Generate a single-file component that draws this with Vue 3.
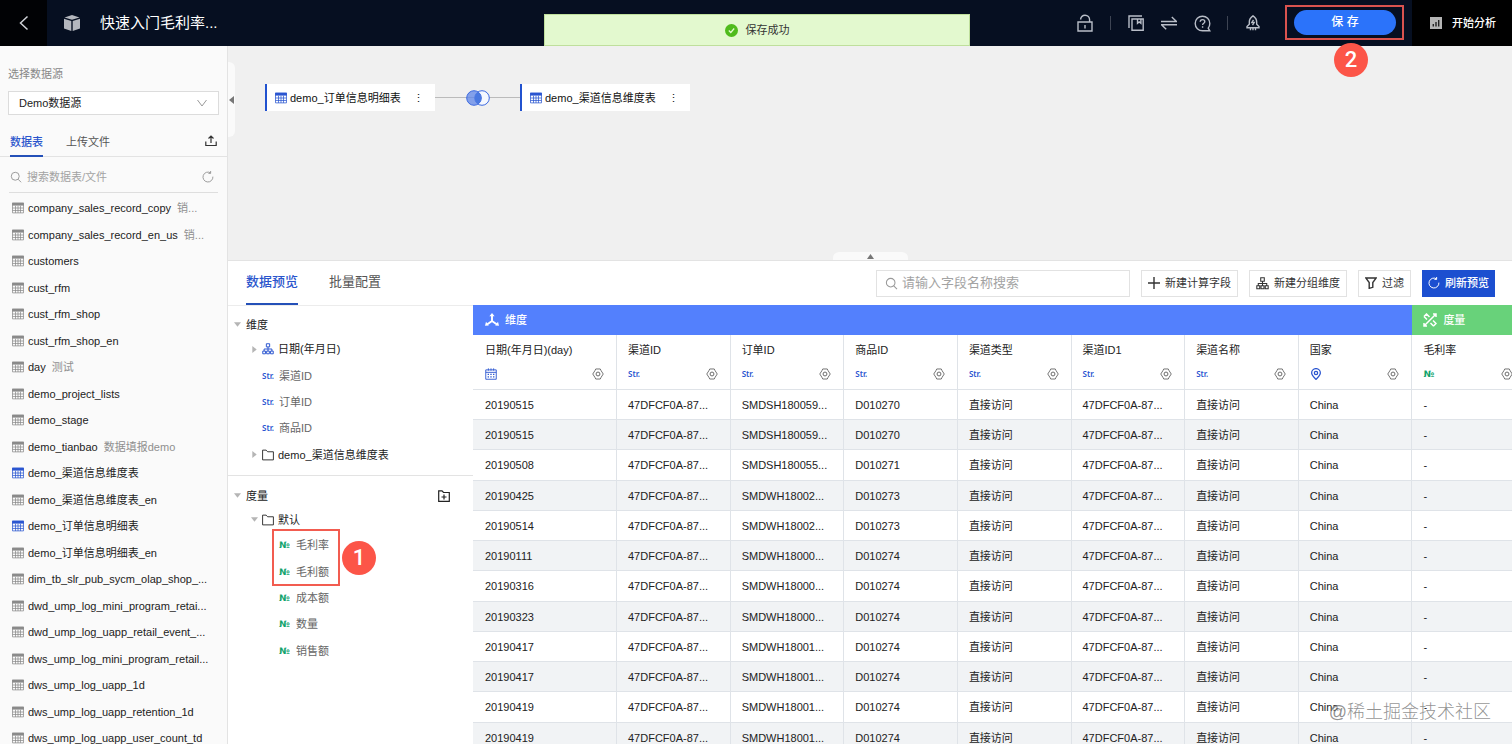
<script setup>
import { ref, h } from 'vue'

const svg = (size, children, extra = {}) =>
  h('svg', { width: size, height: size, viewBox: '0 0 16 16', fill: 'none', stroke: 'currentColor', 'stroke-width': 1.3, 'aria-hidden': 'true', ...extra }, children)
const p = (d, extra = {}) => h('path', { d, ...extra })
const solid = { fill: 'currentColor', stroke: 'none' }

const GridIcon = () => svg(12, [
  p('M.7 1.500h14.600v13H.7zM.7 8h14.600M.7 11.300h14.600M4.700 5v9.500M8 5v9.500M11.300 5v9.500', { 'stroke-width': 1 }),
  p('M.2 1h15.600v3.800H.2z', solid),
])
const FolderIcon = () => svg(12, [p('M.8 14.500V1.500h4.700l2 2.200h7.700v10.800z', { 'stroke-width': 1.200 })])
const TreeIcon = (props) => svg(props.size || 12, [
  p('M5.800 1h4.400v4.200H5.800zM1 10.800h3.600v3.600H1zM6.200 10.800h3.600v3.600H6.200zM11.400 10.800H15v3.600h-3.600zM8 5.200v5.600M2.800 10.800V8h10.400v2.800'),
])
const GearIcon = () => svg(12, [
  p('M5 1.300h6l1.200 2.400L15 8l-2.800 4.300L11 14.700H5l-1.200-2.400L1 8l2.800-4.300z', { 'stroke-width': 1.200 }),
  h('circle', { cx: 8, cy: 8, r: 2.6, 'stroke-width': 1.3 }),
])
const CalendarIcon = () => svg(12, [
  p('M1 2.500h14v12.500H1zM1 5.800h14M4.500.5v3M11.500.5v3M8 .5v3', { 'stroke-width': 1.200 }),
  p('M3.500 8.500h9M3.500 11.800h9', { 'stroke-dasharray': '1.800 1.800', 'stroke-width': 1.600 }),
])
const PinIcon = () => svg(12, [
  p('M8 15.200C4.800 12 2.200 9.600 2.200 6.600a5.800 5.800 0 0 1 11.600 0c0 3-2.600 5.400-5.800 8.600z', { 'stroke-width': 1.700 }),
  h('circle', { cx: 8, cy: 6.7, r: 2.2, 'stroke-width': 1.7 }),
])
const SearchIcon = (props) => svg(props.size || 12, [
  h('circle', { cx: 7, cy: 7, r: 5.3 }),
  p('M10.800 11l4 4'),
])
const ReloadIcon = () => svg(12, [p('M14.500 7.500a6.600 6.600 0 1 1-3-5M11.500 0v3.200H8.500')])
const CaretIcon = (props) => svg(7, [p('open' in props ? 'M0 3h16L8 13z' : 'M3 0v16l10-8z', solid)])

const tables = [
  ['company_sales_record_copy', '销...'],
  ['company_sales_record_en_us', '销...'],
  ['customers'],
  ['cust_rfm'],
  ['cust_rfm_shop'],
  ['cust_rfm_shop_en'],
  ['day', '测试'],
  ['demo_project_lists'],
  ['demo_stage'],
  ['demo_tianbao', '数据填报demo'],
  ['demo_渠道信息维度表', '', true],
  ['demo_渠道信息维度表_en'],
  ['demo_订单信息明细表', '', true],
  ['demo_订单信息明细表_en'],
  ['dim_tb_slr_pub_sycm_olap_shop_...'],
  ['dwd_ump_log_mini_program_retai...'],
  ['dwd_ump_log_uapp_retail_event_...'],
  ['dws_ump_log_mini_program_retail...'],
  ['dws_ump_log_uapp_1d'],
  ['dws_ump_log_uapp_retention_1d'],
  ['dws_ump_log_uapp_user_count_td'],
].map(([name, note, used]) => ({ name, note, used }))

const dimensions = ['渠道ID', '订单ID', '商品ID']
const measures = ['毛利率', '毛利额', '成本额', '数量', '销售额']

const columns = [
  { name: '日期(年月日)(day)', type: 'date' },
  { name: '渠道ID', type: 'str' },
  { name: '订单ID', type: 'str' },
  { name: '商品ID', type: 'str' },
  { name: '渠道类型', type: 'str' },
  { name: '渠道ID1', type: 'str' },
  { name: '渠道名称', type: 'str' },
  { name: '国家', type: 'geo' },
  { name: '毛利率', type: 'num' },
]

const rows = [
  ['20190515', 'SMDSH180059...', 'D010270'],
  ['20190515', 'SMDSH180059...', 'D010270'],
  ['20190508', 'SMDSH180055...', 'D010271'],
  ['20190425', 'SMDWH18002...', 'D010273'],
  ['20190514', 'SMDWH18002...', 'D010273'],
  ['20190111', 'SMDWH18000...', 'D010274'],
  ['20190316', 'SMDWH18000...', 'D010274'],
  ['20190323', 'SMDWH18000...', 'D010274'],
  ['20190417', 'SMDWH18001...', 'D010274'],
  ['20190417', 'SMDWH18001...', 'D010274'],
  ['20190419', 'SMDWH18001...', 'D010274'],
  ['20190419', 'SMDWH18001...', 'D010274'],
].map(([day, order, item]) => [day, '47DFCF0A-87...', order, item, '直接访问', '47DFCF0A-87...', '直接访问', 'China', '-'])

const source = ref('demo')
const tableQuery = ref('')
const fieldQuery = ref('')
</script>

<template>
  <div class="app">
    <header class="topbar">
      <button class="back" aria-label="返回">
        <svg width="16" height="16" viewBox="0 0 16 16" fill="none" stroke="currentColor" stroke-width="1.5"><path d="M11.500 1.500L4.500 8l7 6.500" /></svg>
      </button>
      <svg class="cube" width="18" height="18" viewBox="0 0 18 18" fill="currentColor" aria-hidden="true">
        <path d="M9 1l7.500 2.400L9 5.800 1.500 3.400z" />
        <path d="M1 4.800l7.300 2.300V17L1 14.600z" />
        <path d="M17 4.800L9.700 7.100V17l7.300-2.400z" />
      </svg>
      <h1>快速入门毛利率...</h1>
      <div class="tools">
        <button aria-label="锁定">
          <svg width="16" height="18" viewBox="0 0 16 18"><path d="M1 8h14v9H1zM3.500 5.500C4 2.800 5.800 1.200 8 1.200c2.700 0 4.600 2 4.600 4.600V8M8 11v3.500" /></svg>
        </button>
        <i></i>
        <button aria-label="复制">
          <svg width="16" height="16" viewBox="0 0 16 16"><path d="M1 13V1h13M4 4h11.200v11.200H4zM9.500 4v4.300l1.700-1.300 1.700 1.300V4" /></svg>
        </button>
        <button aria-label="切换">
          <svg width="16" height="16" viewBox="0 0 16 16"><path d="M0 6.500h15.500L10.800 2M16 9.700H.5L5.200 14.200" /></svg>
        </button>
        <button aria-label="帮助">
          <svg width="17" height="17" viewBox="0 0 17 17"><path d="M15.800 15.800H8.500a7.300 7.300 0 1 1 7.300-7.300c0 1.800-.6 3.400-1.600 4.600zM6.200 6.800c0-1.400 1-2.200 2.300-2.200s2.300.8 2.300 2.100c0 1.600-2.200 1.600-2.200 3.300M8.600 11.300v1.500" /></svg>
        </button>
        <i></i>
        <button aria-label="通知">
          <svg width="16" height="16" viewBox="0 0 16 16"><path d="M8 .8C5.500 2.500 4.300 4.500 4.300 7v2.200L2 11.500v1.200h12v-1.200l-2.300-2.300V7C11.700 4.500 10.500 2.500 8 .8zM8.500 4.800L6.800 7.500h2.400L7.500 10.200M5.500 13v2.200M8 13v2.200M10.500 13v2.200" /></svg>
        </button>
      </div>
      <div class="save-mark">
        <button class="save">保 存</button>
        <span class="badge">2</span>
      </div>
      <button class="analyze">
        <svg width="12" height="12" viewBox="0 0 12 12" aria-hidden="true"><path fill="#b5b5b5" d="M0 0h12v12H0z" /><path stroke="#222" stroke-width="1.400" d="M3.300 9.500V7M6 9.500V5M8.700 9.500V3" /></svg>
        开始分析
      </button>
      <div class="toast" role="status">
        <svg width="13" height="13" viewBox="0 0 13 13" aria-hidden="true"><circle cx="6.500" cy="6.500" r="6.500" fill="#4fbb1c" /><path d="M3.800 6.500l2 2 3.400-4" fill="none" stroke="#e5fbd2" stroke-width="1.200" /></svg>
        保存成功
      </div>
    </header>

    <div class="body">
      <aside class="sidebar">
        <label class="source-label" for="source">选择数据源</label>
        <div class="select">
          <select id="source" v-model="source">
            <option value="demo">Demo数据源</option>
          </select>
          <svg width="10" height="8" viewBox="0 0 10 8" fill="none" stroke="#999" aria-hidden="true"><path d="M.5 1L5 7l4.500-6" /></svg>
        </div>
        <nav class="side-tabs">
          <button class="on">数据表</button>
          <button>上传文件</button>
          <button class="upload" aria-label="上传">
            <svg width="12" height="12" viewBox="0 0 12 12" fill="none" stroke="currentColor" stroke-width="1.200"><path d="M.8 6.500v4h10.400v-4M6 8V1M3.500 3.500L6 1l2.500 2.500" /></svg>
          </button>
        </nav>
        <div class="side-search">
          <SearchIcon />
          <input v-model="tableQuery" type="text" placeholder="搜索数据表/文件" aria-label="搜索数据表/文件" />
          <button aria-label="刷新"><ReloadIcon /></button>
        </div>
        <ul class="tables">
          <li v-for="t in tables" :key="t.name" :class="{ used: t.used }">
            <GridIcon /><span>{{ t.name }}</span><small v-if="t.note">{{ t.note }}</small>
          </li>
        </ul>
      </aside>

      <main class="main">
        <section class="canvas">
          <button class="fold-left" aria-label="收起侧栏"><svg width="5" height="8" viewBox="0 0 5 8" fill="#777"><path d="M5 0v8L0 4z" /></svg></button>
          <div class="flow">
            <div class="node"><GridIcon /><span>demo_订单信息明细表</span><button aria-label="更多">⋮</button></div>
            <div class="link">
              <svg width="24" height="16" viewBox="0 0 24 16" aria-hidden="true">
                <circle cx="16" cy="8" r="7.300" fill="#f5f8ff" stroke="#3d6ae0" />
                <circle cx="8" cy="8" r="7.300" fill="#5f86e8" fill-opacity=".75" stroke="#3d6ae0" />
                <path d="M12 1.900a7.300 7.300 0 0 1 0 12.200a7.300 7.300 0 0 1 0-12.200z" fill="#4a78e0" />
              </svg>
            </div>
            <div class="node"><GridIcon /><span>demo_渠道信息维度表</span><button aria-label="更多">⋮</button></div>
          </div>
          <button class="fold-down" aria-label="展开面板"><svg width="7" height="5" viewBox="0 0 7 5" fill="#777"><path d="M0 5h7L3.500 0z" /></svg></button>
        </section>

        <section class="panel">
          <div class="bar">
            <nav class="tabs">
              <button class="on">数据预览</button>
              <button>批量配置</button>
            </nav>
            <div class="field-search">
              <SearchIcon :size="13" />
              <input v-model="fieldQuery" type="text" placeholder="请输入字段名称搜索" aria-label="请输入字段名称搜索" />
            </div>
            <button class="btn"><svg width="12" height="12" viewBox="0 0 12 12" stroke="currentColor" stroke-width="1.400"><path d="M6 0v12M0 6h12" /></svg>新建计算字段</button>
            <button class="btn"><TreeIcon :size="13" />新建分组维度</button>
            <button class="btn"><svg width="12" height="12" viewBox="0 0 12 12" fill="none" stroke="currentColor" stroke-width="1.400"><path d="M.8 1h10.400L7.800 5.500v4.800l-3.600 1V5.500z" /></svg>过滤</button>
            <button class="btn primary"><ReloadIcon />刷新预览</button>
          </div>

          <div class="content">
            <div class="tree">
              <div class="group">
                <h2><CaretIcon open />维度</h2>
                <ul>
                  <li class="branch"><CaretIcon /><TreeIcon class="blue" />日期(年月日)</li>
                  <li v-for="d in dimensions" :key="d"><b class="str">Str.</b>{{ d }}</li>
                  <li class="branch"><CaretIcon /><FolderIcon />demo_渠道信息维度表</li>
                </ul>
              </div>
              <div class="group">
                <h2>
                  <CaretIcon open />度量
                  <button aria-label="新建文件夹"><svg width="12" height="12" viewBox="0 0 12 12" fill="none" stroke="currentColor" stroke-width="1.200"><path d="M.7 11.300V.8H4l1.500 1.700h5.800v8.800zM6 4.500v5M3.500 7h5" /></svg></button>
                </h2>
                <div class="branch folder"><CaretIcon open /><FolderIcon />默认</div>
                <ul class="leaves">
                  <li v-for="m in measures" :key="m"><b class="num">№</b>{{ m }}</li>
                  <li class="mark" aria-hidden="true"><span class="badge">1</span></li>
                </ul>
              </div>
            </div>

            <div class="grid">
              <table>
                <colgroup><col class="first" /><col v-for="n in 8" :key="n" /></colgroup>
                <thead>
                  <tr class="bands">
                    <th colspan="8" class="band-dim">
                      <div><svg width="14" height="14" viewBox="0 0 14 14" fill="none" stroke="currentColor" stroke-width="1.900" aria-hidden="true"><path d="M7 2v6L2 11.500M7 8l5 3.500" /><path d="M7 0l2.600 3.200H4.400zM0 12.800l1-4 2.800 3.700zM14 12.800l-1-4-2.800 3.700z" fill="currentColor" stroke="none" /></svg>维度</div>
                    </th>
                    <th class="band-num">
                      <div><svg width="14" height="14" viewBox="0 0 14 14" fill="none" stroke="currentColor" stroke-width="1.500" aria-hidden="true"><path d="M1 13L13 1M4 13H1v-3M1 3.500L3.500 1l3 3M1 3.500l3 3M10.500 13L13 10.500l-3-3M10.500 13l-3-3M10 1h3v3" /></svg>度量</div>
                    </th>
                  </tr>
                  <tr class="fields">
                    <th v-for="c in columns" :key="c.name">
                      <p>{{ c.name }}</p>
                      <div>
                        <CalendarIcon v-if="c.type === 'date'" class="blue" />
                        <PinIcon v-else-if="c.type === 'geo'" class="blue" />
                        <b v-else-if="c.type === 'num'" class="num">№</b>
                        <b v-else class="str">Str.</b>
                        <button aria-label="字段设置"><GearIcon /></button>
                      </div>
                    </th>
                  </tr>
                </thead>
                <tbody>
                  <tr v-for="(r, i) in rows" :key="i">
                    <td v-for="(v, j) in r" :key="j">{{ v }}</td>
                  </tr>
                </tbody>
              </table>
            </div>
          </div>
        </section>
      </main>
    </div>
    <div class="watermark">@稀土掘金技术社区</div>
  </div>
</template>

<style>
body {
  background: #fff;
}
</style>

<style scoped>
* {
  box-sizing: border-box;
}
.app {
  position: relative;
  display: flex;
  flex-direction: column;
  height: 100vh;
  overflow: hidden;
  font: 11px/16px "Liberation Sans", "Noto Sans CJK SC", sans-serif;
  color: #222;
}
button,
input,
select {
  font: inherit;
  color: inherit;
  border: 0;
  padding: 0;
  margin: 0;
  background: none;
  outline: 0;
}
ul,
h1,
h2,
p {
  margin: 0;
  padding: 0;
  list-style: none;
  font-size: inherit;
  font-weight: 400;
}
svg {
  display: block;
  flex: none;
}
input::placeholder {
  color: #a3a3a3;
  opacity: 1;
}

.topbar {
  position: relative;
  z-index: 2;
  flex: none;
  display: flex;
  align-items: center;
  height: 46px;
  background: #060f21;
  color: #fff;
}
.back {
  display: flex;
  align-items: center;
  justify-content: center;
  width: 47px;
  height: 46px;
  background: #010205;
  color: #cfd2d8;
}
.cube {
  margin-left: 16px;
  color: #b4b7be;
}
h1 {
  margin-left: 19px;
  font-size: 15px;
  line-height: 22px;
}
.tools {
  display: flex;
  align-items: center;
  gap: 17px;
  margin-left: auto;
  color: #b9bec8;
}
.tools button {
  display: flex;
  justify-content: center;
  width: 16px;
}
.tools svg {
  fill: none;
  stroke: currentColor;
  stroke-width: 1.4;
}
.tools i {
  width: 1px;
  height: 14px;
  background: #3d4453;
}
.save-mark {
  position: relative;
  margin: 0 8px 2px 24px;
  padding: 3px 6px 3px 7px;
  border: 2px solid #d9534f;
}
.save {
  display: block;
  width: 102px;
  height: 25px;
  border-radius: 13px;
  background: #2b73fa;
  font-size: 12px;
  font-weight: 500;
}
.badge {
  display: block;
  width: 34px;
  height: 34px;
  border-radius: 50%;
  background: #fc5548;
  color: #fff;
  font: 500 22px/34px Roboto, sans-serif;
  text-align: center;
}
.save-mark .badge {
  position: absolute;
  top: 36px;
  left: 47px;
}
.analyze {
  display: flex;
  align-items: center;
  gap: 10px;
  height: 46px;
  padding: 0 16px 0 18px;
  background: #000;
  font-weight: 500;
}
.toast {
  position: absolute;
  left: 2px;
  right: 0;
  bottom: 0;
  display: flex;
  align-items: center;
  justify-content: center;
  gap: 8px;
  width: 426px;
  height: 32px;
  margin: 0 auto;
  border: 1px solid #bfdf9c;
  background: #e3f9cf;
  color: #333;
}

.body {
  flex: 1;
  display: flex;
  min-height: 0;
}
.sidebar {
  flex: none;
  display: flex;
  flex-direction: column;
  width: 228px;
  overflow: hidden;
  border-right: 1px solid #e3e3e3;
  background: #fafafa;
}
.sidebar > * {
  flex: none;
}
.source-label {
  margin: 20px 8px 9px;
  color: #888;
}
.select {
  position: relative;
  margin: 0 8px;
}
.select select {
  display: block;
  width: 100%;
  height: 24px;
  padding: 0 10px;
  appearance: none;
  border: 1px solid #dcdcdc;
  background: #fff;
}
.select svg {
  position: absolute;
  top: 8px;
  right: 12px;
}
.side-tabs {
  display: flex;
  gap: 23px;
  height: 42px;
  padding: 13px 10px 0;
  border-bottom: 1px solid #e3e3e3;
  color: #555;
}
.side-tabs button {
  height: 29px;
  padding-bottom: 2px;
}
.side-tabs .on,
.tabs .on {
  border-bottom: 2px solid #2450b8;
  color: #2a55cc;
  font-weight: 500;
}
.side-tabs .on {
  padding-bottom: 0;
}
.side-tabs .upload {
  margin-left: auto;
  padding-bottom: 4px;
  color: #333;
}
.side-search {
  display: flex;
  align-items: center;
  gap: 5px;
  height: 36px;
  margin: 0 9px;
  padding: 5px 4px 0 1px;
  border-bottom: 1px solid #dedede;
  color: #999;
}
.side-search input {
  flex: 1;
  min-width: 0;
}
.tables {
  padding-top: 2px;
}
.tables li {
  display: flex;
  align-items: center;
  height: 26px;
  padding-left: 12px;
  white-space: nowrap;
}
.tables li:nth-child(even) {
  height: 27px;
}
.tables svg {
  margin-right: 4px;
  color: #8a8a8a;
}
.tables .used svg,
.blue {
  color: #2a55d0;
}
.tables small {
  margin-left: 6px;
  font-size: 11px;
  color: #8f8f8f;
}

.main {
  flex: 1;
  display: flex;
  flex-direction: column;
  min-width: 0;
}
.canvas {
  position: relative;
  flex: none;
  height: 214px;
  padding: 38px 37px;
  background: #f0f0f0;
}
.flow {
  display: flex;
  align-items: center;
}
.node {
  display: flex;
  align-items: center;
  width: 170px;
  height: 27px;
  padding: 0 14px 0 8px;
  border-left: 2px solid #2152cf;
  background: #fff;
  color: #111;
}
.node svg {
  margin-right: 3px;
  color: #2a55d0;
}
.node button {
  margin-left: auto;
  width: 8px;
}
.link {
  display: flex;
  justify-content: center;
  width: 85px;
  background: linear-gradient(#bbb, #bbb) center / 100% 1px no-repeat;
}
.fold-left,
.fold-down {
  position: absolute;
  display: flex;
  align-items: center;
  justify-content: center;
  background: #fafafa;
}
.fold-left {
  left: 0;
  top: 16px;
  width: 7px;
  height: 75px;
  border-radius: 0 6px 6px 0;
}
.fold-down {
  left: 605px;
  bottom: 0;
  width: 75px;
  height: 8px;
  border-radius: 6px 6px 0 0;
}

.panel {
  flex: 1;
  display: flex;
  flex-direction: column;
  min-height: 0;
}
.bar {
  flex: none;
  display: flex;
  align-items: center;
  gap: 11px;
  height: 45px;
  padding: 0 17px 0 18px;
  border-top: 1px solid #e3e3e3;
}
.tabs {
  align-self: stretch;
  display: flex;
  gap: 31px;
  margin-right: auto;
  font-size: 13px;
  color: #555;
}
.tabs button {
  border-bottom: 2px solid transparent;
}
.field-search {
  display: flex;
  align-items: center;
  gap: 4px;
  width: 254px;
  height: 27px;
  padding: 0 8px;
  border: 1px solid #e2e2e2;
  color: #999;
  font-size: 13px;
}
.field-search input {
  flex: 1;
  min-width: 0;
}
.btn {
  display: flex;
  align-items: center;
  gap: 5px;
  height: 27px;
  padding: 0 6px;
  border: 1px solid #e2e2e2;
  color: #333;
  white-space: nowrap;
}
.primary {
  padding: 0 5px;
  border-color: #1c4fd0;
  background: #1c4fd0;
  color: #fff;
  font-weight: 500;
}
.content {
  flex: 1;
  display: flex;
  min-height: 0;
}
.tree {
  flex: none;
  width: 245px;
  border-top: 1px solid #ececec;
}
.group {
  position: relative;
  padding: 7px 0;
}
.group + .group {
  padding-top: 8px;
  border-top: 1px solid #e3e3e3;
}
h2 {
  display: flex;
  align-items: center;
  gap: 5px;
  height: 23px;
  padding: 0 23px 0 6px;
}
h2 button {
  margin-left: auto;
}
h2 > svg,
.branch > svg:first-child {
  color: #b5b5b5;
}
.group li,
.folder {
  display: flex;
  align-items: center;
  gap: 5px;
  height: 26px;
  padding-left: 34px;
  color: #666;
}
.group li:nth-child(3n + 2) {
  height: 27px;
}
.group .branch {
  gap: 4px;
  padding-left: 23px;
  color: #222;
}
.group .folder {
  height: 25px;
}
.branch > .blue {
  color: #2a55d0;
}
.leaves {
  position: relative;
}
.group .leaves li {
  padding-left: 51px;
}
.str,
.num {
  width: 12px;
  white-space: nowrap;
  font: 600 8px/16px "Noto Sans", sans-serif;
  color: #2a55d0;
}
.num {
  font: 700 9px/16px "DejaVu Sans", sans-serif;
  color: #12a36c;
}
.group .leaves .mark {
  position: absolute;
  top: -3px;
  left: 44px;
  width: 68px;
  height: 57px;
  padding: 0;
  border: 2px solid #f25c50;
}
.mark .badge {
  position: absolute;
  top: 10px;
  left: 68px;
}

.grid {
  flex: 1;
  min-width: 0;
  overflow: hidden;
}
table {
  width: 100%;
  min-width: 1053px;
  table-layout: fixed;
  border-collapse: separate;
  border-spacing: 0;
}
.first {
  width: 144px;
}
th,
td {
  padding: 0 12px 0 11px;
  text-align: left;
  font-weight: 400;
  white-space: nowrap;
}
th:first-child,
td:first-child {
  padding-left: 12px;
}
.bands th {
  height: 30px;
  color: #fff;
  font-weight: 500;
}
.bands div {
  display: flex;
  align-items: center;
  gap: 6px;
}
.band-dim {
  background: #5380fd;
}
.band-num {
  background: #68d27a;
}
.fields th,
td {
  border-right: 1px solid #dfe3e8;
  border-bottom: 1px solid #dfe3e8;
}
.fields th {
  height: 55px;
}
.fields div {
  display: flex;
  align-items: center;
  justify-content: space-between;
  margin-top: 8px;
  height: 16px;
}
.fields button {
  color: #666;
}
td {
  height: 30px;
}
tbody tr:nth-child(4n + 3) td {
  height: 31px;
}
tbody tr:nth-child(even) {
  background: #f1f3f5;
}
.watermark {
  position: absolute;
  right: 21px;
  bottom: 20px;
  font-size: 18px;
  line-height: 24px;
  font-weight: 300;
  color: rgba(110, 110, 110, 0.75);
  text-shadow: 1px 1px 0 rgba(255, 255, 255, 0.8);
  pointer-events: none;
}
</style>
